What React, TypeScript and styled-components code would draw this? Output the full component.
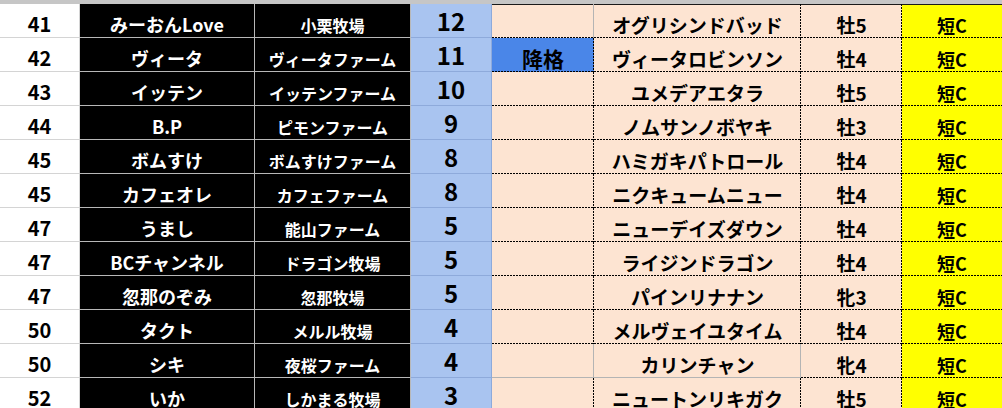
import styled, { createGlobalStyle, css } from "styled-components";

const GlobalStyle = createGlobalStyle`
  html, body {
    margin: 0;
    padding: 0;
    background: #ffffff;
  }
  body {
    font-family: "Noto Sans CJK JP", "Noto Sans", sans-serif;
    font-weight: 700;
  }
`;

type Entry = {
  rank: number;
  owner: string;
  farm: string;
  point: number;
  note?: string;
  horse: string;
  sex: string;
  grade: string;
  boxed?: boolean;
};

const entries: Entry[] = [
  { rank: 41, owner: "みーおんLove", farm: "小栗牧場", point: 12, horse: "オグリシンドバッド", sex: "牡5", grade: "短C" },
  { rank: 42, owner: "ヴィータ", farm: "ヴィータファーム", point: 11, note: "降格", horse: "ヴィータロビンソン", sex: "牡4", grade: "短C" },
  { rank: 43, owner: "イッテン", farm: "イッテンファーム", point: 10, horse: "ユメデアエタラ", sex: "牡5", grade: "短C" },
  { rank: 44, owner: "B.P", farm: "ピモンファーム", point: 9, horse: "ノムサンノボヤキ", sex: "牡3", grade: "短C" },
  { rank: 45, owner: "ボムすけ", farm: "ボムすけファーム", point: 8, horse: "ハミガキパトロール", sex: "牡4", grade: "短C" },
  { rank: 45, owner: "カフェオレ", farm: "カフェファーム", point: 8, horse: "ニクキュームニュー", sex: "牡4", grade: "短C" },
  { rank: 47, owner: "うまし", farm: "能山ファーム", point: 5, horse: "ニューデイズダウン", sex: "牡4", grade: "短C" },
  { rank: 47, owner: "BCチャンネル", farm: "ドラゴン牧場", point: 5, horse: "ライジンドラゴン", sex: "牡4", grade: "短C" },
  { rank: 47, owner: "忽那のぞみ", farm: "忽那牧場", point: 5, horse: "パインリナナン", sex: "牝3", grade: "短C" },
  { rank: 50, owner: "タクト", farm: "メルル牧場", point: 4, horse: "メルヴェイユタイム", sex: "牡4", grade: "短C" },
  { rank: 50, owner: "シキ", farm: "夜桜ファーム", point: 4, horse: "カリンチャン", sex: "牝4", grade: "短C", boxed: true },
  { rank: 52, owner: "いか", farm: "しかまる牧場", point: 3, horse: "ニュートンリキガク", sex: "牡5", grade: "短C" },
];

const PEACH = "#fde4d2";
const GRID = "#b4b4b4";
const EDGE = "#1a1a1a";

const Sheet = styled.div`
  width: 1002px;
  height: 408px;
  overflow: hidden;
  background: #ffffff;
  border-top: 4px solid #c6c6c6;
  box-sizing: border-box;
`;

const Row = styled.div`
  display: grid;
  grid-template-columns: 80px 175px 156px 81px 102px 207px 101px 100px;
  height: 34px;
`;

const Cell = styled.div<{ $first?: boolean }>`
  box-sizing: border-box;
  display: flex;
  align-items: center;
  justify-content: center;
  padding-top: 7px;
  line-height: 1;
  white-space: nowrap;
  overflow: hidden;
  color: #000000;
`;

// excel-like hairline dots: 2px on, 1px off, drawn in the cell's last pixel row/column
const dotH = "repeating-linear-gradient(to right, #000 0 2px, transparent 2px 3px)";
const dotV = "repeating-linear-gradient(to bottom, #000 0 2px, transparent 2px 3px)";
const solid = (c: string) => `linear-gradient(${c}, ${c})`;

const lines = (bottom: string, right: string | null, top: string | null) => {
  const layers = [
    { img: bottom, size: "100% 1px", pos: "left bottom" },
    right ? { img: right, size: "1px 100%", pos: "right top" } : null,
    top ? { img: top, size: "100% 1px", pos: "left top" } : null,
  ].filter(Boolean) as { img: string; size: string; pos: string }[];
  return css`
    background-image: ${layers.map((l) => l.img).join(", ")};
    background-size: ${layers.map((l) => l.size).join(", ")};
    background-position: ${layers.map((l) => l.pos).join(", ")};
    background-repeat: no-repeat;
  `;
};

const RankCell = styled(Cell)`
  background: #ffffff;
  font-size: 20px;
  border-right: 1px solid #d4d4d4;
  border-bottom: 1px solid #d4d4d4;
`;

const OwnerCell = styled(Cell)`
  background: #000000;
  color: #ffffff;
  font-size: 18px;
  border-right: 1px solid #b8b8b8;
  border-bottom: 1px solid #b8b8b8;
`;

const FarmCell = styled(Cell)`
  background: #000000;
  color: #ffffff;
  font-size: 16px;
  padding-top: 9px;
  border-right: 1px solid #b8b8b8;
  border-bottom: 1px solid #b8b8b8;
`;

const PointCell = styled(Cell)`
  background: #a9c4f0;
  font-size: 24px;
  padding-top: 1px;
  border-right: 1px solid #8eaadb;
  border-bottom: 1px solid #8eaadb;
`;

const NoteCell = styled(Cell)<{ $tone?: "blue"; $boxed?: boolean }>`
  background-color: ${(p) => (p.$tone === "blue" ? "#4a86e8" : PEACH)};
  font-size: 21px;
  ${(p) =>
    p.$boxed
      ? lines(solid(GRID), solid(GRID), null)
      : p.$first
      ? lines(dotH, solid(GRID), solid(EDGE))
      : lines(dotH, dotV, null)}
`;

const HorseCell = styled(Cell)<{ $boxed?: boolean }>`
  background-color: ${PEACH};
  font-size: 19px;
  ${(p) =>
    p.$boxed
      ? lines(solid(GRID), solid(GRID), null)
      : lines(dotH, dotV, p.$first ? solid(EDGE) : null)}
`;

const SexCell = styled(Cell)`
  background-color: ${PEACH};
  font-size: 19px;
  ${(p) => lines(dotH, dotV, p.$first ? solid(EDGE) : null)}
`;

const GradeCell = styled(Cell)`
  background-color: #ffff00;
  font-size: 18px;
  ${(p) => lines(dotH, null, p.$first ? solid(EDGE) : null)}
`;

export default function App() {
  return (
    <>
      <GlobalStyle />
      <Sheet>
        {entries.map((e, i) => (
          <Row key={i}>
            <RankCell>{e.rank}</RankCell>
            <OwnerCell>{e.owner}</OwnerCell>
            <FarmCell>{e.farm}</FarmCell>
            <PointCell>{e.point}</PointCell>
            <NoteCell
              $first={i === 0}
              $boxed={e.boxed}
              $tone={e.note ? "blue" : undefined}
            >
              {e.note}
            </NoteCell>
            <HorseCell $first={i === 0} $boxed={e.boxed}>
              {e.horse}
            </HorseCell>
            <SexCell $first={i === 0}>{e.sex}</SexCell>
            <GradeCell $first={i === 0}>{e.grade}</GradeCell>
          </Row>
        ))}
      </Sheet>
    </>
  );
}
